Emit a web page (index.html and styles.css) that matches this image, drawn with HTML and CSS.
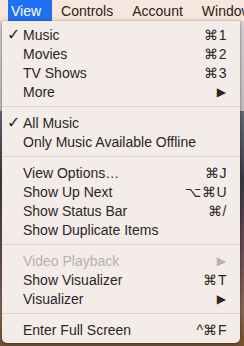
FILE: index.html
```html
<!DOCTYPE html>
<html lang="en">
<head>
  <meta charset="UTF-8">
  <title>View menu</title>
  <link rel="stylesheet" href="styles.css">
</head>
<body>

<div id="menubar">
  <span class="title active">View</span>
  <span class="title">Controls</span>
  <span class="title">Account</span>
  <span class="title">Window</span>
</div>

<div id="desk">
  <div class="window"></div>
  <div class="photo"></div>

  <div id="menu">
    <div class="item"><span class="check">✓</span><span class="label">Music</span><span class="key">⌘1</span></div>
    <div class="item"><span class="check"></span><span class="label">Movies</span><span class="key">⌘2</span></div>
    <div class="item"><span class="check"></span><span class="label">TV Shows</span><span class="key">⌘3</span></div>
    <div class="item"><span class="check"></span><span class="label">More</span><span class="arrow">▶</span></div>
    <div class="sep"></div>
    <div class="item"><span class="check">✓</span><span class="label">All Music</span></div>
    <div class="item"><span class="check"></span><span class="label">Only Music Available Offline</span></div>
    <div class="sep"></div>
    <div class="item"><span class="check"></span><span class="label">View Options…</span><span class="key">⌘J</span></div>
    <div class="item"><span class="check"></span><span class="label">Show Up Next</span><span class="key">⌥⌘U</span></div>
    <div class="item"><span class="check"></span><span class="label">Show Status Bar</span><span class="key">⌘/</span></div>
    <div class="item"><span class="check"></span><span class="label">Show Duplicate Items</span></div>
    <div class="sep"></div>
    <div class="item disabled"><span class="check"></span><span class="label">Video Playback</span><span class="arrow">▶</span></div>
    <div class="item"><span class="check"></span><span class="label">Show Visualizer</span><span class="key">⌘T</span></div>
    <div class="item"><span class="check"></span><span class="label">Visualizer</span><span class="arrow">▶</span></div>
    <div class="sep"></div>
    <div class="item"><span class="check"></span><span class="label">Enter Full Screen</span><span class="key">^⌘F</span></div>
  </div>
</div>

</body>
</html>
```

FILE: styles.css
```css
body {
  margin: 0;
  width: 244px;
  height: 346px;
  overflow: hidden;
  font-family: "Liberation Sans", Arial, sans-serif;
  font-size: 14px;
  color: #2b2626;
  background-color: #d9d4d3;
}

#menubar {
  display: flex;
  height: 21px;
  padding-left: 8px;
  background-color: #f7e6dd;
  white-space: nowrap;
  overflow: hidden;
}

.title {
  display: flex;
  align-items: center;
  padding: 0 9px 0 3px;
  margin-right: 7px;
  color: #2b2320;
}

.title.active {
  background-color: #1f71f4;
  color: white;
  padding: 0 11px 0 3px;
  margin-right: 6px;
}

#desk {
  position: relative;
  height: 325px;
}

.window {
  height: 90px;
  background: linear-gradient(#dcd8d7, #c9c5c4);
}

.photo {
  height: 235px;
  background: linear-gradient(#6a6f7c 0%, #3e3c45 30%, #6d4f56 60%, #8c6c5c 85%, #7a5530 100%);
}

#menu {
  position: absolute;
  top: 0;
  left: 2px;
  width: 238px;
  padding: 4px 0;
  background-color: #f3ece9;
  border-radius: 0 0 5px 5px;
  box-shadow: 0 2px 6px rgba(0, 0, 0, 0.35), 0 0 0 1px rgba(0, 0, 0, 0.08);
}

.item {
  display: flex;
  align-items: center;
  height: 19px;
  padding-right: 13px;
}

.check {
  width: 21px;
  padding-left: 5px;
  box-sizing: border-box;
  font-family: "DejaVu Sans", sans-serif;
  font-size: 16px;
  line-height: 19px;
}

.label {
  flex: 1;
}

.key {
  font-size: 14px;
  letter-spacing: 0.5px;
}

.arrow {
  font-family: "DejaVu Sans", sans-serif;
  font-size: 12px;
  color: #2b2626;
  margin-right: 1px;
}

.disabled .label,
.disabled .arrow {
  color: #b9b0ad;
}

.sep {
  height: 1px;
  margin: 5px 0 6px;
  background-color: #ddd5d2;
}
```
